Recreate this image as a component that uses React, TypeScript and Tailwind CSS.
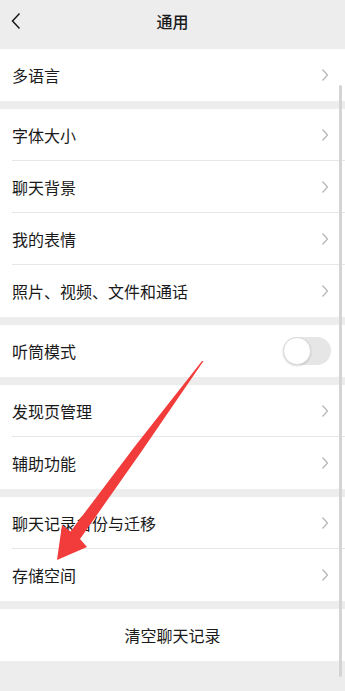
import React from 'react';

const font = { fontFamily: '"Noto Sans CJK SC", "Noto Sans", sans-serif' };

function Chevron() {
    return (
        <svg width="8" height="14" viewBox="0 0 8 14" className="shrink-0">
            <path d="M1.5 1.5 L6.5 7 L1.5 12.5" fill="none" stroke="#b8b8b8" strokeWidth="1.3" />
        </svg>
    );
}

function Row({ label, last, right }: { label: string; last?: boolean; right?: React.ReactNode }) {
    return (
        <div className="h-[52px] pl-3 flex">
            <div className={`flex-1 flex items-center justify-between pr-[16px] ${last ? '' : 'border-b border-[#e6e6e6]'}`}>
                <span className="text-[16px] text-[#1a1a1a]">{label}</span>
                {right ?? <Chevron />}
            </div>
        </div>
    );
}

function Toggle() {
    return (
        <div className="w-[48px] h-[28px] rounded-full bg-[#e6e6e6] relative mr-[-2px]">
            <div className="absolute left-0 top-0 w-[28px] h-[28px] rounded-full bg-white border border-[#dcdcdc] shadow-[0_1px_2px_rgba(0,0,0,0.15)]" />
        </div>
    );
}

function Group({ children }: { children: React.ReactNode }) {
    return <div className="bg-white mb-2">{children}</div>;
}

export default function App() {
    return (
        <div className="relative w-[345px] h-[691px] bg-[#ededed] overflow-hidden" style={font}>
            <header className="h-[49px] relative flex items-center justify-center">
                <svg width="12" height="18" viewBox="0 0 12 18" className="absolute left-[10px] top-[12px]">
                    <path d="M9.5 1.5 L2.5 9 L9.5 16.5" fill="none" stroke="#1a1a1a" strokeWidth="1.5" />
                </svg>
                <span className="text-[16px] font-medium text-[#1a1a1a] -mt-[8px]">通用</span>
            </header>

            <Group>
                <Row label="多语言" last />
            </Group>

            <Group>
                <Row label="字体大小" />
                <Row label="聊天背景" />
                <Row label="我的表情" />
                <Row label="照片、视频、文件和通话" last />
            </Group>

            <Group>
                <Row label="听筒模式" last right={<Toggle />} />
            </Group>

            <Group>
                <Row label="发现页管理" />
                <Row label="辅助功能" last />
            </Group>

            <Group>
                <Row label="聊天记录备份与迁移" />
                <Row label="存储空间" last />
            </Group>

            <div className="bg-white h-[52px] flex items-center justify-center">
                <span className="text-[16px] text-[#1a1a1a]">清空聊天记录</span>
            </div>

            {/* scroll indicator */}
            <div className="absolute right-[3px] top-[85px] w-[3px] h-[592px] bg-[#d4d4d4] rounded-full" />

            {/* red annotation arrow */}
            <svg className="absolute inset-0 pointer-events-none" width="345" height="691" viewBox="0 0 345 691">
                <polygon
                    points="203.5,361 142.5,450 80,539 87,547 57,560 62,525 70.5,531.5 135.5,445.5 202,361"
                    fill="#f23b3b"
                />
            </svg>
        </div>
    );
}
